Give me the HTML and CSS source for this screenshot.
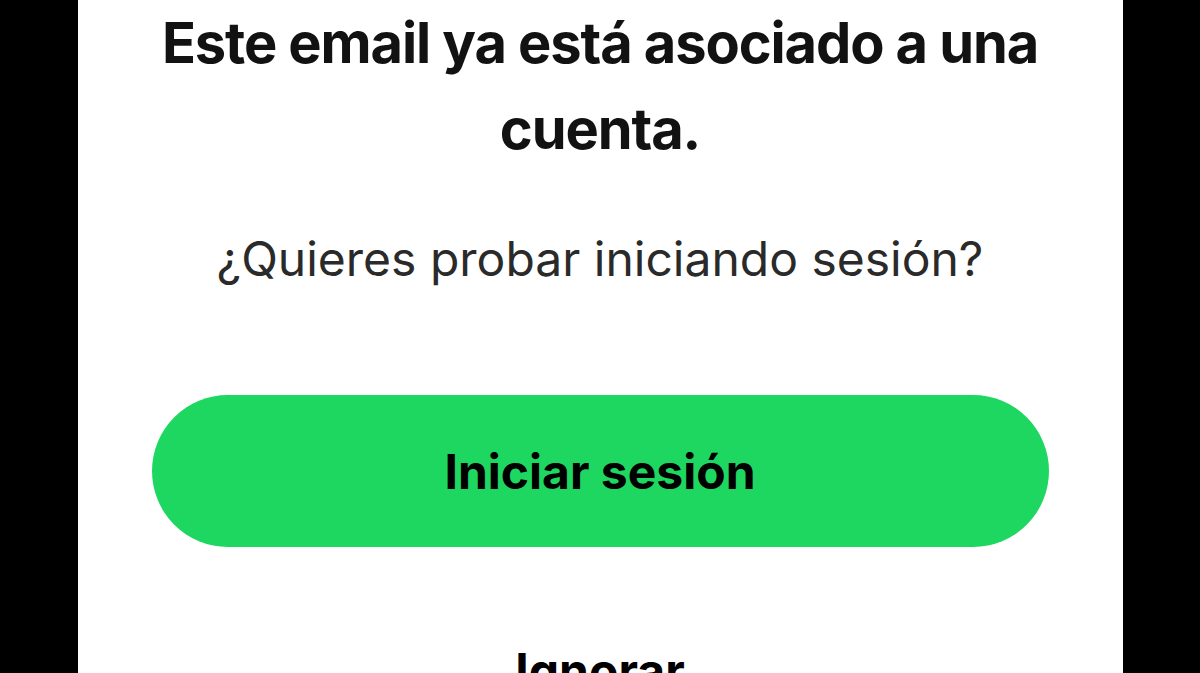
FILE: index.html
```html
<!DOCTYPE html>
<html lang="es">
<head>
<meta charset="utf-8">
<link rel="stylesheet" href="styles.css">
</head>
<body>
<div class="stage">
  <main class="panel">
    <h1 class="title">Este email ya está asociado a una cuenta.</h1>
    <p class="subtitle">¿Quieres probar iniciando sesión?</p>
    <button class="primary">Iniciar sesión</button>
    <button class="link">Ignorar</button>
  </main>
</div>
</body>
</html>
```
FILE: styles.css
```css
html, body {
  margin: 0;
  padding: 0;
  background: #000;
  height: 100%;
  overflow: hidden;
}
.stage {
  display: flex;
  justify-content: center;
  height: 673px;
  overflow: hidden;
}
.panel {
  width: 1045px;
  background: #fff;
  box-sizing: border-box;
  padding: 0 74px;
  display: flex;
  flex-direction: column;
  align-items: stretch;
  font-family: Inter, "Liberation Sans", sans-serif;
  text-align: center;
}
.panel > * {
  flex-shrink: 0;
}
.title {
  margin: 0 -10px;
  font-size: 56px;
  line-height: 86px;
  font-weight: 700;
  color: #121212;
  letter-spacing: -1.1px;
}
.subtitle {
  margin: 57px 0 0;
  font-size: 48px;
  line-height: 60px;
  font-weight: 400;
  color: #2a2a2a;
}
.primary {
  margin-top: 106px;
  height: 152px;
  border: none;
  border-radius: 76px;
  background: #1ed760;
  color: #000;
  font-family: inherit;
  font-size: 48px;
  font-weight: 700;
  padding: 0;
}
.link {
  margin-top: 94px;
  align-self: center;
  border: none;
  background: none;
  color: #000;
  font-family: inherit;
  font-size: 48px;
  font-weight: 700;
  padding: 0;
  line-height: 60px;
}
```
